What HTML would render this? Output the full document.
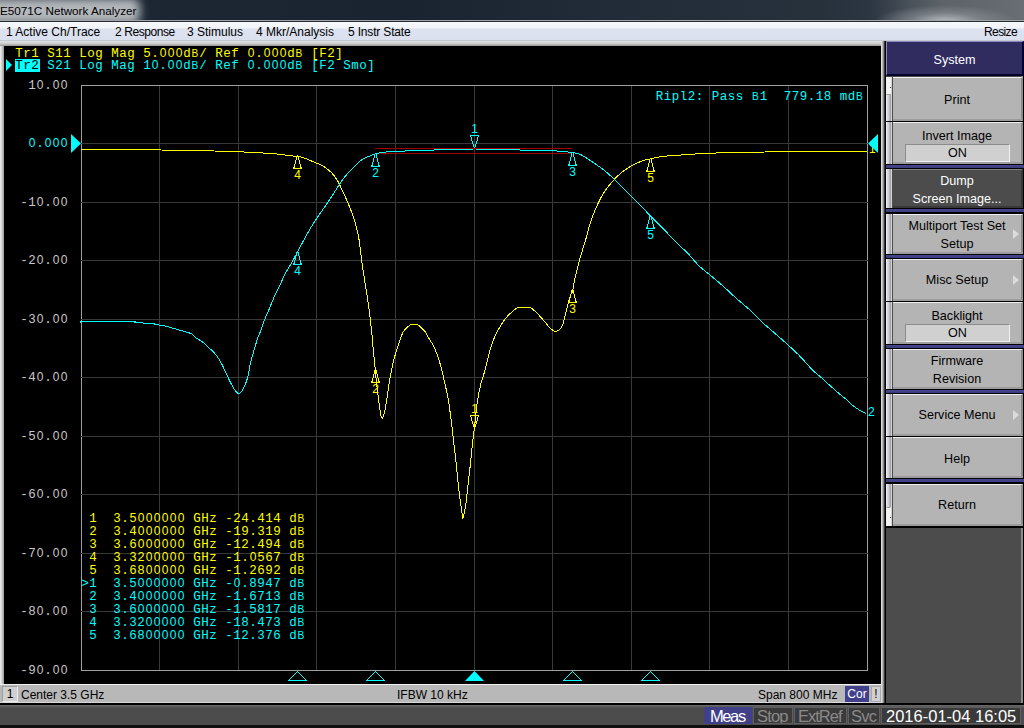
<!DOCTYPE html>
<html><head><meta charset="utf-8"><style>
*{margin:0;padding:0;box-sizing:border-box}
html,body{width:1024px;height:728px;overflow:hidden;background:#4c4c4c;font-family:"Liberation Sans",sans-serif}
.abs{position:absolute}
.mono{font-family:"Liberation Mono",monospace;font-size:12.5px;letter-spacing:0.5px;white-space:pre;position:absolute;line-height:14px}
.ylab{width:68px;text-align:right;left:0}
.mrow{left:81.5px}
.mn{font-family:"Liberation Sans",sans-serif;font-size:12px}
.m{font-family:"Liberation Mono",monospace;font-size:12.5px;text-anchor:middle}
.z{font-family:"Liberation Sans",sans-serif;font-size:12px;text-anchor:middle}
.bb{font-family:"Liberation Sans",sans-serif;font-size:10.2px;text-anchor:middle}
#title{left:0;top:0;width:1024px;height:20px;overflow:hidden;background:
 radial-gradient(ellipse 70px 16px at 945px 21px, rgba(190,196,200,0.9) 0%, rgba(140,146,152,0.6) 50%, rgba(90,96,104,0) 100%),
 linear-gradient(90deg,#1e2834 0%,#1a2430 40%,#222c38 60%,#27313c 80%,#2c3642 85%,#4a525a 89%,#5c6268 92%,#686e74 100%);}
#glow{position:absolute;left:-20px;top:-2px;width:160px;height:26px;background:#b4b8bc;filter:blur(5px);border-radius:8px}
#title span{position:absolute;left:0;top:3px;font-size:11.7px;color:#000;line-height:16px}
#menu{left:0;top:20px;width:1024px;height:22px;background:linear-gradient(#a0a4a8 0,#a0a4a8 1px,#2a2e34 1px,#2a2e34 2px,#f6f8fb 2px,#f1f4f9 8px,#dce2ef 9px,#dae0ee 20px,#c4c8d0 20px,#c4c8d0 21px,#e8e8e8 21px)}
#menu span{position:absolute;top:4px;font-size:12px;line-height:16px;color:#000}
#frame{left:0;top:41px;width:886px;height:663px;background:linear-gradient(90deg,#f0f0f0 0,#d0d0d0 2px,#a8a8a8 3px,#a8a8a8 4px,#c8c8c8 4px)}
#frametop{left:0;top:41px;width:886px;height:5px;background:linear-gradient(#e4e4e4,#c8c8c8 60%,#909090)}
#chart{left:4px;top:46px;width:877px;height:638px;background:#000}
#frameR{left:881px;top:41px;width:5px;height:663px;background:linear-gradient(90deg,#e8e8e8 0,#d0d0d0 1px,#a0a0a0 2px,#707070 3px,#000 4px)}
#status{left:0;top:684px;width:881px;height:20px;background:linear-gradient(#f0f0f0 0,#f0f0f0 1px,#b8b8b8 1px,#b8b8b8 18px,#d8d8d8 18px,#d8d8d8 19px,#101010 19px)}
#status span{position:absolute;top:3px;font-size:12px;line-height:16px;color:#000}
#bottom{left:0;top:703px;width:1024px;height:25px;background:linear-gradient(#000 0,#000 2px,#6c6c6c 2px,#4c4c4c 5px,#4c4c4c 22px,#101010 22px)}
.bbox{position:absolute;top:707px;height:17px;background:#3a3a3a;border:1px solid #5e5e5e;font-size:16.5px;line-height:16px;color:#8a8a8a;white-space:nowrap;overflow:hidden}
#soft{left:886px;top:41px;width:138px;height:662px;background:linear-gradient(90deg,#4c4c4c 0,#4c4c4c 135px,#8c8c8c 135px,#8c8c8c 137px,#000 137px)}
.sk{position:absolute;left:893px;width:130px;background:#b4b4b4;border-top:1px solid #f0f0f0;border-right:2px solid #8c8c8c;border-bottom:2px solid #9c9c9c;font-size:12.6px;color:#000;text-align:center;line-height:18px}
.sep{position:absolute;left:886px;width:138px;background:linear-gradient(#000 0,#000 1px,#46468a 1px,#3c3c7c 4px,#000 4px)}
.sepb{position:absolute;left:886px;width:138px;height:1px;background:#000}
.onbox{position:absolute;left:905px;width:105px;height:18px;background:#d0d0d0;border-top:1px solid #8c8c8c;border-left:1px solid #8c8c8c;border-bottom:1px solid #f0f0f0;border-right:1px solid #f0f0f0;font-size:12.6px;line-height:16px;text-align:center;color:#000}
.arrow{position:absolute;left:1013px;width:0;height:0;border-top:5px solid transparent;border-bottom:5px solid transparent;border-left:6px solid #dcdcdc}
</style></head><body>
<div id="title" class="abs"><div id="glow"></div><span>E5071C Network Analyzer</span></div>
<div id="menu" class="abs">
<span style="left:6px">1 Active Ch/Trace</span>
<span style="left:115px;letter-spacing:-0.43px">2 Response</span>
<span style="left:187px">3 Stimulus</span>
<span style="left:256px">4 Mkr/Analysis</span>
<span style="left:348px;letter-spacing:-0.17px">5 Instr State</span>
<span style="left:984px;letter-spacing:-0.6px">Resize</span>
</div>
<div id="frame" class="abs"></div>
<div id="frametop" class="abs"></div>
<div id="chart" class="abs"></div>
<div id="frameR" class="abs"></div>

<svg class="abs" style="left:0;top:0" width="1024" height="728">
<text class="m" x="19 27 35 51 59 67 83 91 99 115 123 131 147 155 187 203 219 227 235 259 291 315 323 331 339" y="57.13" fill="#ffff00">Tr1S11LogMag5.d/Ref.d[F2]</text><text class="z" x="163 171 179 251 267 275 283" y="57.13" fill="#ffff00">0000000</text><text class="bb" x="195 299" y="57.13" fill="#ffff00">BB</text>
<rect x="15" y="59" width="25" height="13" fill="#00ffff"/>
<text class="m" x="19 27 35" y="69.33" fill="#000000">Tr2</text>
<text class="m" x="51 59 67 83 91 99 115 123 131 147 163 187 203 219 227 235 259 291 315 323 331 347 355 363 371" y="69.33" fill="#00ffff">S21LogMag1.d/Ref.d[F2Smo]</text><text class="z" x="155 171 179 251 267 275 283" y="69.33" fill="#00ffff">0000000</text><text class="bb" x="195 299" y="69.33" fill="#00ffff">BB</text>

<polygon points="6,59 12,65 6,71" fill="#00ffff"/>
<line x1="81.5" y1="85" x2="81.5" y2="670" stroke="#a0a0a0"/>
<line x1="159.5" y1="85" x2="159.5" y2="670" stroke="#393939"/>
<line x1="238.5" y1="85" x2="238.5" y2="670" stroke="#393939"/>
<line x1="316.5" y1="85" x2="316.5" y2="670" stroke="#393939"/>
<line x1="395.5" y1="85" x2="395.5" y2="670" stroke="#393939"/>
<line x1="474.5" y1="85" x2="474.5" y2="670" stroke="#393939"/>
<line x1="552.5" y1="85" x2="552.5" y2="670" stroke="#393939"/>
<line x1="631.5" y1="85" x2="631.5" y2="670" stroke="#393939"/>
<line x1="709.5" y1="85" x2="709.5" y2="670" stroke="#393939"/>
<line x1="788.5" y1="85" x2="788.5" y2="670" stroke="#393939"/>
<line x1="867.5" y1="85" x2="867.5" y2="670" stroke="#a0a0a0"/>
<line x1="81" y1="85.5" x2="868" y2="85.5" stroke="#a0a0a0"/>
<line x1="81" y1="143.5" x2="868" y2="143.5" stroke="#393939"/>
<line x1="81" y1="202.5" x2="868" y2="202.5" stroke="#393939"/>
<line x1="81" y1="260.5" x2="868" y2="260.5" stroke="#393939"/>
<line x1="81" y1="319.5" x2="868" y2="319.5" stroke="#393939"/>
<line x1="81" y1="377.5" x2="868" y2="377.5" stroke="#393939"/>
<line x1="81" y1="436.5" x2="868" y2="436.5" stroke="#393939"/>
<line x1="81" y1="494.5" x2="868" y2="494.5" stroke="#393939"/>
<line x1="81" y1="553.5" x2="868" y2="553.5" stroke="#393939"/>
<line x1="81" y1="611.5" x2="868" y2="611.5" stroke="#393939"/>
<line x1="81" y1="670.5" x2="868" y2="670.5" stroke="#a0a0a0"/>
<text class="m" x="659.5 667.5 675.5 683.5 691.5 699.5 715.5 723.5 731.5 739.5 763.5 787.5 795.5 803.5 811.5 819.5 827.5 843.5 851.5" y="100.33" fill="#00ffff">Ripl2:Pass1779.18md</text><text class="bb" x="755.5 859.5" y="100.33" fill="#00ffff">BB</text>
<text class="m" x="32 48" y="89.33" fill="#c8c8c8">1.</text><text class="z" x="40 56 64" y="89.33" fill="#c8c8c8">000</text>
<text class="m" x="40" y="147.33" fill="#00ffff">.</text><text class="z" x="32 48 56 64" y="147.33" fill="#00ffff">0000</text>
<text class="m" x="24 32 48" y="206.33" fill="#c8c8c8">-1.</text><text class="z" x="40 56 64" y="206.33" fill="#c8c8c8">000</text>
<text class="m" x="24 32 48" y="264.33" fill="#c8c8c8">-2.</text><text class="z" x="40 56 64" y="264.33" fill="#c8c8c8">000</text>
<text class="m" x="24 32 48" y="323.33" fill="#c8c8c8">-3.</text><text class="z" x="40 56 64" y="323.33" fill="#c8c8c8">000</text>
<text class="m" x="24 32 48" y="381.33" fill="#c8c8c8">-4.</text><text class="z" x="40 56 64" y="381.33" fill="#c8c8c8">000</text>
<text class="m" x="24 32 48" y="440.33" fill="#c8c8c8">-5.</text><text class="z" x="40 56 64" y="440.33" fill="#c8c8c8">000</text>
<text class="m" x="24 32 48" y="498.33" fill="#c8c8c8">-6.</text><text class="z" x="40 56 64" y="498.33" fill="#c8c8c8">000</text>
<text class="m" x="24 32 48" y="557.33" fill="#c8c8c8">-7.</text><text class="z" x="40 56 64" y="557.33" fill="#c8c8c8">000</text>
<text class="m" x="24 32 48" y="615.33" fill="#c8c8c8">-8.</text><text class="z" x="40 56 64" y="615.33" fill="#c8c8c8">000</text>
<text class="m" x="24 32 48" y="674.33" fill="#c8c8c8">-9.</text><text class="z" x="40 56 64" y="674.33" fill="#c8c8c8">000</text>
<text class="m" x="93 117 125 133 197 205 213 229 237 245 253 261 269 277 293" y="522.33" fill="#ffff00">13.5GHz-24.414d</text><text class="z" x="141 149 157 165 173 181" y="522.33" fill="#ffff00">000000</text><text class="bb" x="301" y="522.33" fill="#ffff00">B</text>
<text class="m" x="93 117 125 133 197 205 213 229 237 245 253 261 269 277 293" y="535.33" fill="#ffff00">23.4GHz-19.319d</text><text class="z" x="141 149 157 165 173 181" y="535.33" fill="#ffff00">000000</text><text class="bb" x="301" y="535.33" fill="#ffff00">B</text>
<text class="m" x="93 117 125 133 197 205 213 229 237 245 253 261 269 277 293" y="548.33" fill="#ffff00">33.6GHz-12.494d</text><text class="z" x="141 149 157 165 173 181" y="548.33" fill="#ffff00">000000</text><text class="bb" x="301" y="548.33" fill="#ffff00">B</text>
<text class="m" x="93 117 125 133 141 197 205 213 229 237 245 261 269 277 293" y="561.33" fill="#ffff00">43.32GHz-1.567d</text><text class="z" x="149 157 165 173 181 253" y="561.33" fill="#ffff00">000000</text><text class="bb" x="301" y="561.33" fill="#ffff00">B</text>
<text class="m" x="93 117 125 133 141 197 205 213 229 237 245 253 261 269 277 293" y="574.33" fill="#ffff00">53.68GHz-1.2692d</text><text class="z" x="149 157 165 173 181" y="574.33" fill="#ffff00">00000</text><text class="bb" x="301" y="574.33" fill="#ffff00">B</text>
<text class="m" x="85 93 117 125 133 197 205 213 229 245 253 261 269 277 293" y="587.33" fill="#00ffff">&gt;13.5GHz-.8947d</text><text class="z" x="141 149 157 165 173 181 237" y="587.33" fill="#00ffff">0000000</text><text class="bb" x="301" y="587.33" fill="#00ffff">B</text>
<text class="m" x="93 117 125 133 197 205 213 229 237 245 253 261 269 277 293" y="600.33" fill="#00ffff">23.4GHz-1.6713d</text><text class="z" x="141 149 157 165 173 181" y="600.33" fill="#00ffff">000000</text><text class="bb" x="301" y="600.33" fill="#00ffff">B</text>
<text class="m" x="93 117 125 133 197 205 213 229 237 245 253 261 269 277 293" y="613.33" fill="#00ffff">33.6GHz-1.5817d</text><text class="z" x="141 149 157 165 173 181" y="613.33" fill="#00ffff">000000</text><text class="bb" x="301" y="613.33" fill="#00ffff">B</text>
<text class="m" x="93 117 125 133 141 197 205 213 229 237 245 253 261 269 277 293" y="626.33" fill="#00ffff">43.32GHz-18.473d</text><text class="z" x="149 157 165 173 181" y="626.33" fill="#00ffff">00000</text><text class="bb" x="301" y="626.33" fill="#00ffff">B</text>
<text class="m" x="93 117 125 133 141 197 205 213 229 237 245 253 261 269 277 293" y="639.33" fill="#00ffff">53.68GHz-12.376d</text><text class="z" x="149 157 165 173 181" y="639.33" fill="#00ffff">00000</text><text class="bb" x="301" y="639.33" fill="#00ffff">B</text>
<line x1="375" y1="148.5" x2="572" y2="148.5" stroke="#a00000"/>
<line x1="375" y1="153.5" x2="572" y2="153.5" stroke="#a00000"/>
<polyline points="81.00,149.50 96.01,149.58 117.69,149.69 141.02,149.83 161.00,150.00 176.69,150.21 190.62,150.47 203.00,150.74 214.00,151.00 223.38,151.25 231.12,151.50 237.81,151.75 244.00,152.00 249.64,152.25 254.50,152.50 258.86,152.75 263.00,153.00 266.99,153.25 270.69,153.50 274.04,153.75 277.00,154.00 279.42,154.25 281.38,154.50 283.14,154.75 285.00,155.00 287.07,155.26 289.19,155.53 291.21,155.79 293.00,156.00 294.46,156.15 295.69,156.25 296.82,156.35 298.00,156.50 299.26,156.69 300.53,156.91 301.79,157.17 303.00,157.50 304.20,157.93 305.39,158.44 306.51,158.96 307.50,159.40 308.26,159.71 308.86,159.94 309.46,160.18 310.25,160.50 311.20,160.89 312.25,161.32 313.48,161.84 315.00,162.50 316.94,163.31 319.20,164.25 321.56,165.31 323.75,166.50 325.77,167.85 327.73,169.36 329.58,170.94 331.25,172.50 332.71,174.04 334.00,175.61 335.16,177.18 336.25,178.75 337.14,180.08 337.84,181.25 338.63,182.73 339.75,185.00 341.37,188.36 343.33,192.50 345.37,196.95 347.25,201.25 348.93,205.25 350.53,209.22 352.05,213.26 353.50,217.50 354.88,221.89 356.20,226.41 357.41,231.15 358.50,236.25 359.41,241.89 360.17,247.97 360.87,254.12 361.60,260.00 362.37,265.43 363.13,270.62 363.92,275.82 364.75,281.25 365.69,287.22 366.70,293.52 367.68,299.62 368.50,305.00 369.11,309.31 369.57,312.89 369.97,316.28 370.40,320.00 370.89,324.41 371.40,329.16 371.87,333.70 372.25,337.50 372.47,340.05 372.57,341.75 372.68,343.45 372.90,346.00 373.31,349.95 373.82,354.73 374.34,359.53 374.75,363.50 374.97,366.13 375.07,367.95 375.18,369.74 375.40,372.25 375.78,375.81 376.25,379.98 376.76,384.35 377.25,388.50 377.70,392.35 378.13,396.12 378.59,399.82 379.10,403.50 379.68,407.58 380.31,411.91 380.96,415.64 381.60,417.90 382.23,418.31 382.85,417.38 383.48,415.61 384.10,413.50 384.71,411.15 385.31,408.30 385.93,404.93 386.60,401.00 387.33,396.24 388.10,390.77 388.91,385.09 389.75,379.75 390.65,374.74 391.59,369.83 392.55,365.19 393.50,361.00 394.39,357.52 395.26,354.58 396.18,351.72 397.25,348.50 398.53,344.52 399.96,340.11 401.45,335.90 402.90,332.50 404.36,330.14 405.86,328.48 407.28,327.26 408.50,326.25 409.39,325.48 410.05,325.03 410.70,324.79 411.60,324.60 412.79,324.33 414.15,324.08 415.65,324.09 417.25,324.60 419.07,325.78 421.08,327.46 423.05,329.37 424.75,331.25 426.06,333.07 427.12,334.96 428.08,336.87 429.10,338.75 430.18,340.46 431.26,342.06 432.36,343.82 433.50,346.00 434.74,348.73 436.04,351.84 437.32,355.16 438.50,358.50 439.53,361.79 440.45,365.14 441.34,368.61 442.25,372.25 443.22,376.22 444.20,380.45 445.15,384.64 446.00,388.50 446.70,391.65 447.29,394.36 447.86,397.26 448.50,401.00 449.27,406.13 450.11,412.19 450.92,418.27 451.60,423.50 452.06,427.33 452.39,430.33 452.69,433.29 453.10,437.00 453.67,441.83 454.33,447.30 454.99,452.93 455.60,458.25 456.11,463.08 456.57,467.70 457.01,472.28 457.50,477.00 458.04,482.03 458.61,487.23 459.19,492.32 459.75,497.00 460.32,501.30 460.91,505.34 461.45,508.96 461.90,512.00 462.17,514.67 462.31,516.98 462.47,518.43 462.80,518.50 463.37,516.87 464.10,513.86 464.88,509.99 465.60,505.75 466.25,501.06 466.87,495.73 467.48,490.10 468.10,484.50 468.74,478.88 469.39,473.09 470.02,467.39 470.60,462.00 471.12,456.96 471.59,452.16 472.04,447.59 472.50,443.25 472.95,439.49 473.39,436.20 473.86,432.69 474.40,428.25 475.02,422.35 475.71,415.48 476.45,408.50 477.25,402.25 478.11,396.94 479.04,392.13 480.01,387.69 481.00,383.50 482.04,379.68 483.12,376.26 484.21,372.93 485.25,369.40 486.21,365.55 487.12,361.55 488.03,357.57 489.00,353.75 490.04,350.11 491.12,346.56 492.24,343.17 493.40,340.00 494.55,337.14 495.71,334.55 496.96,332.03 498.40,329.40 500.11,326.52 502.03,323.52 504.01,320.63 505.90,318.10 507.72,315.99 509.52,314.17 511.23,312.60 512.75,311.25 514.03,310.15 515.12,309.30 516.11,308.64 517.10,308.10 518.00,307.71 518.80,307.48 519.70,307.35 520.90,307.25 522.56,307.12 524.54,307.01 526.57,307.02 528.40,307.25 529.86,307.64 531.12,308.18 532.42,309.00 534.00,310.25 536.02,312.14 538.33,314.54 540.66,317.08 542.75,319.40 544.53,321.48 546.15,323.49 547.63,325.33 549.00,326.90 550.27,328.16 551.43,329.18 552.48,329.98 553.40,330.60 554.14,331.02 554.73,331.23 555.28,331.29 555.90,331.25 556.62,331.17 557.37,331.02 558.17,330.66 559.00,330.00 559.89,329.11 560.83,328.02 561.80,326.52 562.75,324.40 563.69,321.40 564.62,317.71 565.56,313.76 566.50,310.00 567.47,306.33 568.45,302.58 569.40,299.10 570.25,296.25 570.98,294.38 571.62,293.23 572.20,292.17 572.75,290.60 573.19,288.52 573.53,286.20 573.94,283.43 574.60,280.00 575.58,275.66 576.78,270.59 578.12,265.22 579.50,260.00 580.98,254.91 582.58,249.77 584.17,244.74 585.60,240.00 586.78,235.67 587.79,231.64 588.81,227.72 590.00,223.75 591.43,219.60 593.01,215.39 594.64,211.30 596.25,207.50 597.78,204.07 599.30,200.90 600.85,197.90 602.50,195.00 604.26,192.19 606.09,189.51 608.01,186.92 610.00,184.40 612.07,181.92 614.22,179.51 616.45,177.19 618.75,175.00 621.10,172.96 623.52,171.05 626.04,169.24 628.75,167.50 631.79,165.76 635.08,164.05 638.33,162.50 641.25,161.25 643.67,160.40 645.78,159.87 647.81,159.46 650.00,159.00 652.35,158.45 654.77,157.90 657.29,157.37 660.00,156.90 663.04,156.48 666.34,156.10 669.60,155.77 672.50,155.50 674.78,155.32 676.66,155.22 678.58,155.14 681.00,155.00 683.95,154.79 687.22,154.53 690.88,154.26 695.00,154.00 699.10,153.75 703.31,153.50 708.62,153.25 716.00,153.00 725.04,152.74 735.44,152.47 748.37,152.21 765.00,152.00 789.16,151.83 819.06,151.69 847.43,151.58 867.00,151.50" fill="none" stroke="#ffff00" stroke-width="1" shape-rendering="crispEdges"/>
<polyline points="81.00,322.50 80.73,322.30 80.12,322.00 80.95,321.70 85.00,321.50 94.51,321.41 107.94,321.38 121.40,321.41 131.00,321.50 134.86,321.67 135.34,321.92 134.90,322.21 136.00,322.50 139.54,322.79 144.13,323.11 148.78,323.43 152.50,323.75 154.93,324.07 156.63,324.39 157.99,324.71 159.40,325.00 160.82,325.23 162.08,325.42 163.41,325.65 165.00,326.00 167.00,326.53 169.26,327.18 171.58,327.87 173.75,328.50 175.65,329.03 177.42,329.51 179.23,330.01 181.25,330.60 183.69,331.29 186.41,332.03 189.04,332.85 191.25,333.75 192.79,334.75 193.91,335.83 194.94,336.96 196.25,338.10 197.98,339.21 199.92,340.32 201.90,341.49 203.75,342.75 205.42,344.16 206.99,345.69 208.51,347.24 210.00,348.75 211.44,350.12 212.84,351.41 214.21,352.78 215.60,354.40 216.99,356.26 218.38,358.28 219.79,360.54 221.25,363.10 222.80,366.15 224.42,369.59 226.01,373.08 227.50,376.25 228.82,379.04 230.04,381.62 231.24,384.02 232.50,386.25 233.89,388.51 235.34,390.72 236.77,392.51 238.10,393.50 239.27,393.58 240.34,392.95 241.39,391.72 242.50,390.00 243.75,387.70 245.08,384.81 246.37,381.53 247.50,378.10 248.41,374.36 249.17,370.26 249.87,366.18 250.60,362.50 251.37,359.41 252.13,356.68 252.92,354.05 253.75,351.25 254.67,348.07 255.67,344.69 256.64,341.46 257.50,338.75 258.15,336.92 258.67,335.70 259.23,334.44 260.00,332.50 261.12,329.43 262.47,325.66 263.83,321.88 265.00,318.75 265.90,316.54 266.65,314.87 267.32,313.42 268.00,311.90 268.63,310.39 269.19,308.98 269.80,307.44 270.60,305.50 271.64,302.97 272.85,300.03 274.13,296.98 275.40,294.10 276.63,291.50 277.88,289.01 279.14,286.54 280.40,284.00 281.63,281.40 282.83,278.77 284.10,276.08 285.50,273.30 287.15,270.32 288.97,267.18 290.78,264.11 292.40,261.30 293.64,259.11 294.63,257.32 295.72,255.32 297.25,252.50 299.42,248.41 302.01,243.47 304.72,238.36 307.25,233.75 309.50,229.85 311.62,226.30 313.75,222.89 316.00,219.40 318.47,215.73 321.08,212.01 323.65,208.38 326.00,205.00 328.05,201.98 329.91,199.22 331.68,196.53 333.50,193.75 335.40,190.74 337.31,187.63 339.20,184.62 341.00,181.90 342.61,179.65 344.09,177.71 345.65,175.83 347.50,173.75 349.87,171.25 352.59,168.51 355.27,165.90 357.50,163.75 358.96,162.28 359.92,161.26 360.93,160.40 362.50,159.40 364.93,158.12 367.89,156.75 370.97,155.45 373.75,154.40 376.10,153.69 378.23,153.20 380.32,152.84 382.50,152.50 384.37,152.19 385.98,151.94 388.24,151.73 392.00,151.50 397.90,151.25 405.34,151.00 413.36,150.75 421.00,150.50 428.13,150.24 435.22,149.97 442.20,149.71 449.00,149.50 455.76,149.32 462.47,149.16 468.82,149.04 474.50,149.00 478.36,149.04 480.91,149.16 484.38,149.32 491.00,149.50 502.96,149.71 518.53,149.97 534.09,150.24 546.00,150.50 552.88,150.75 556.81,151.00 559.34,151.25 562.00,151.50 564.99,151.74 567.56,151.97 569.85,152.21 572.00,152.50 574.01,152.82 575.83,153.17 577.48,153.56 579.00,154.00 580.19,154.39 581.11,154.75 582.16,155.30 583.75,156.25 586.16,157.79 589.12,159.75 592.21,161.84 595.00,163.75 597.33,165.34 599.45,166.80 601.53,168.29 603.75,170.00 606.13,171.95 608.59,174.06 611.13,176.33 613.75,178.75 616.50,181.42 619.38,184.30 622.25,187.22 625.00,190.00 627.65,192.65 630.23,195.23 632.71,197.71 635.00,200.00 637.05,202.04 638.91,203.88 640.68,205.65 642.50,207.50 644.32,209.42 646.09,211.35 647.95,213.35 650.00,215.50 652.24,217.74 654.61,220.06 657.18,222.57 660.00,225.40 663.14,228.66 666.56,232.25 670.14,235.99 673.75,239.70 677.53,243.43 681.48,247.24 685.32,250.96 688.75,254.40 691.57,257.49 693.98,260.33 696.28,263.01 698.75,265.60 701.45,268.05 704.22,270.34 707.07,272.61 710.00,275.00 712.98,277.49 716.02,280.03 719.17,282.70 722.50,285.60 726.12,288.89 729.96,292.46 733.82,296.06 737.50,299.40 740.94,302.37 744.24,305.12 747.45,307.81 750.60,310.60 753.70,313.60 756.74,316.70 759.69,319.73 762.50,322.50 765.13,324.91 767.62,327.07 770.04,329.14 772.50,331.25 774.85,333.29 777.11,335.23 779.56,337.37 782.50,340.00 786.18,343.31 790.39,347.11 794.72,351.10 798.75,355.00 802.48,358.93 806.10,362.97 809.48,366.78 812.50,370.00 815.01,372.37 817.12,374.14 819.07,375.69 821.10,377.40 823.21,379.32 825.30,381.25 827.44,383.24 829.70,385.30 832.23,387.56 834.94,389.95 837.59,392.26 839.90,394.25 841.77,395.79 843.35,397.02 844.78,398.13 846.20,399.30 847.63,400.61 849.00,401.94 850.32,403.23 851.60,404.40 852.81,405.41 853.94,406.30 855.09,407.14 856.30,408.00 857.64,408.92 859.05,409.86 860.46,410.74 861.80,411.50 863.14,412.13 864.49,412.67 865.67,413.10 866.50,413.40" fill="none" stroke="#00ffff" stroke-width="1" shape-rendering="crispEdges"/>
<rect x="474" y="427" width="1" height="1" fill="#ffff00"/><rect x="473" y="426" width="1" height="1" fill="#ffff00"/><rect x="475" y="426" width="1" height="1" fill="#ffff00"/><rect x="473" y="425" width="1" height="1" fill="#ffff00"/><rect x="475" y="425" width="1" height="1" fill="#ffff00"/><rect x="473" y="424" width="1" height="1" fill="#ffff00"/><rect x="475" y="424" width="1" height="1" fill="#ffff00"/><rect x="472" y="423" width="1" height="1" fill="#ffff00"/><rect x="476" y="423" width="1" height="1" fill="#ffff00"/><rect x="472" y="422" width="1" height="1" fill="#ffff00"/><rect x="476" y="422" width="1" height="1" fill="#ffff00"/><rect x="472" y="421" width="1" height="1" fill="#ffff00"/><rect x="476" y="421" width="1" height="1" fill="#ffff00"/><rect x="471" y="420" width="1" height="1" fill="#ffff00"/><rect x="477" y="420" width="1" height="1" fill="#ffff00"/><rect x="471" y="419" width="1" height="1" fill="#ffff00"/><rect x="477" y="419" width="1" height="1" fill="#ffff00"/><rect x="471" y="418" width="1" height="1" fill="#ffff00"/><rect x="477" y="418" width="1" height="1" fill="#ffff00"/><rect x="471" y="417" width="1" height="1" fill="#ffff00"/><rect x="477" y="417" width="1" height="1" fill="#ffff00"/><rect x="470" y="416" width="1" height="1" fill="#ffff00"/><rect x="478" y="416" width="1" height="1" fill="#ffff00"/><rect x="470" y="415" width="9" height="1" fill="#ffff00"/>
<text x="474.5" y="413" fill="#ffff00" text-anchor="middle" class="mn">1</text>
<rect x="375" y="369" width="1" height="1" fill="#ffff00"/><rect x="374" y="370" width="1" height="1" fill="#ffff00"/><rect x="376" y="370" width="1" height="1" fill="#ffff00"/><rect x="374" y="371" width="1" height="1" fill="#ffff00"/><rect x="376" y="371" width="1" height="1" fill="#ffff00"/><rect x="374" y="372" width="1" height="1" fill="#ffff00"/><rect x="376" y="372" width="1" height="1" fill="#ffff00"/><rect x="374" y="373" width="1" height="1" fill="#ffff00"/><rect x="376" y="373" width="1" height="1" fill="#ffff00"/><rect x="373" y="374" width="1" height="1" fill="#ffff00"/><rect x="377" y="374" width="1" height="1" fill="#ffff00"/><rect x="373" y="375" width="1" height="1" fill="#ffff00"/><rect x="377" y="375" width="1" height="1" fill="#ffff00"/><rect x="373" y="376" width="1" height="1" fill="#ffff00"/><rect x="377" y="376" width="1" height="1" fill="#ffff00"/><rect x="373" y="377" width="1" height="1" fill="#ffff00"/><rect x="377" y="377" width="1" height="1" fill="#ffff00"/><rect x="372" y="378" width="1" height="1" fill="#ffff00"/><rect x="378" y="378" width="1" height="1" fill="#ffff00"/><rect x="372" y="379" width="1" height="1" fill="#ffff00"/><rect x="378" y="379" width="1" height="1" fill="#ffff00"/><rect x="372" y="380" width="1" height="1" fill="#ffff00"/><rect x="378" y="380" width="1" height="1" fill="#ffff00"/><rect x="372" y="381" width="1" height="1" fill="#ffff00"/><rect x="378" y="381" width="1" height="1" fill="#ffff00"/><rect x="371" y="382" width="9" height="1" fill="#ffff00"/><rect x="371" y="381" width="1" height="1" fill="#ffff00"/><rect x="379" y="381" width="1" height="1" fill="#ffff00"/>
<text x="375.5" y="392.8" fill="#ffff00" text-anchor="middle" class="mn">2</text>
<rect x="572" y="289" width="1" height="1" fill="#ffff00"/><rect x="571" y="290" width="1" height="1" fill="#ffff00"/><rect x="573" y="290" width="1" height="1" fill="#ffff00"/><rect x="571" y="291" width="1" height="1" fill="#ffff00"/><rect x="573" y="291" width="1" height="1" fill="#ffff00"/><rect x="571" y="292" width="1" height="1" fill="#ffff00"/><rect x="573" y="292" width="1" height="1" fill="#ffff00"/><rect x="571" y="293" width="1" height="1" fill="#ffff00"/><rect x="573" y="293" width="1" height="1" fill="#ffff00"/><rect x="570" y="294" width="1" height="1" fill="#ffff00"/><rect x="574" y="294" width="1" height="1" fill="#ffff00"/><rect x="570" y="295" width="1" height="1" fill="#ffff00"/><rect x="574" y="295" width="1" height="1" fill="#ffff00"/><rect x="570" y="296" width="1" height="1" fill="#ffff00"/><rect x="574" y="296" width="1" height="1" fill="#ffff00"/><rect x="570" y="297" width="1" height="1" fill="#ffff00"/><rect x="574" y="297" width="1" height="1" fill="#ffff00"/><rect x="569" y="298" width="1" height="1" fill="#ffff00"/><rect x="575" y="298" width="1" height="1" fill="#ffff00"/><rect x="569" y="299" width="1" height="1" fill="#ffff00"/><rect x="575" y="299" width="1" height="1" fill="#ffff00"/><rect x="569" y="300" width="1" height="1" fill="#ffff00"/><rect x="575" y="300" width="1" height="1" fill="#ffff00"/><rect x="569" y="301" width="1" height="1" fill="#ffff00"/><rect x="575" y="301" width="1" height="1" fill="#ffff00"/><rect x="568" y="302" width="9" height="1" fill="#ffff00"/><rect x="568" y="301" width="1" height="1" fill="#ffff00"/><rect x="576" y="301" width="1" height="1" fill="#ffff00"/>
<text x="572.5" y="312.8" fill="#ffff00" text-anchor="middle" class="mn">3</text>
<rect x="297" y="155" width="1" height="1" fill="#ffff00"/><rect x="296" y="156" width="1" height="1" fill="#ffff00"/><rect x="298" y="156" width="1" height="1" fill="#ffff00"/><rect x="296" y="157" width="1" height="1" fill="#ffff00"/><rect x="298" y="157" width="1" height="1" fill="#ffff00"/><rect x="296" y="158" width="1" height="1" fill="#ffff00"/><rect x="298" y="158" width="1" height="1" fill="#ffff00"/><rect x="296" y="159" width="1" height="1" fill="#ffff00"/><rect x="298" y="159" width="1" height="1" fill="#ffff00"/><rect x="295" y="160" width="1" height="1" fill="#ffff00"/><rect x="299" y="160" width="1" height="1" fill="#ffff00"/><rect x="295" y="161" width="1" height="1" fill="#ffff00"/><rect x="299" y="161" width="1" height="1" fill="#ffff00"/><rect x="295" y="162" width="1" height="1" fill="#ffff00"/><rect x="299" y="162" width="1" height="1" fill="#ffff00"/><rect x="295" y="163" width="1" height="1" fill="#ffff00"/><rect x="299" y="163" width="1" height="1" fill="#ffff00"/><rect x="294" y="164" width="1" height="1" fill="#ffff00"/><rect x="300" y="164" width="1" height="1" fill="#ffff00"/><rect x="294" y="165" width="1" height="1" fill="#ffff00"/><rect x="300" y="165" width="1" height="1" fill="#ffff00"/><rect x="294" y="166" width="1" height="1" fill="#ffff00"/><rect x="300" y="166" width="1" height="1" fill="#ffff00"/><rect x="294" y="167" width="1" height="1" fill="#ffff00"/><rect x="300" y="167" width="1" height="1" fill="#ffff00"/><rect x="293" y="168" width="9" height="1" fill="#ffff00"/><rect x="293" y="167" width="1" height="1" fill="#ffff00"/><rect x="301" y="167" width="1" height="1" fill="#ffff00"/>
<text x="297.5" y="178.8" fill="#ffff00" text-anchor="middle" class="mn">4</text>
<rect x="650" y="158" width="1" height="1" fill="#ffff00"/><rect x="649" y="159" width="1" height="1" fill="#ffff00"/><rect x="651" y="159" width="1" height="1" fill="#ffff00"/><rect x="649" y="160" width="1" height="1" fill="#ffff00"/><rect x="651" y="160" width="1" height="1" fill="#ffff00"/><rect x="649" y="161" width="1" height="1" fill="#ffff00"/><rect x="651" y="161" width="1" height="1" fill="#ffff00"/><rect x="649" y="162" width="1" height="1" fill="#ffff00"/><rect x="651" y="162" width="1" height="1" fill="#ffff00"/><rect x="648" y="163" width="1" height="1" fill="#ffff00"/><rect x="652" y="163" width="1" height="1" fill="#ffff00"/><rect x="648" y="164" width="1" height="1" fill="#ffff00"/><rect x="652" y="164" width="1" height="1" fill="#ffff00"/><rect x="648" y="165" width="1" height="1" fill="#ffff00"/><rect x="652" y="165" width="1" height="1" fill="#ffff00"/><rect x="648" y="166" width="1" height="1" fill="#ffff00"/><rect x="652" y="166" width="1" height="1" fill="#ffff00"/><rect x="647" y="167" width="1" height="1" fill="#ffff00"/><rect x="653" y="167" width="1" height="1" fill="#ffff00"/><rect x="647" y="168" width="1" height="1" fill="#ffff00"/><rect x="653" y="168" width="1" height="1" fill="#ffff00"/><rect x="647" y="169" width="1" height="1" fill="#ffff00"/><rect x="653" y="169" width="1" height="1" fill="#ffff00"/><rect x="647" y="170" width="1" height="1" fill="#ffff00"/><rect x="653" y="170" width="1" height="1" fill="#ffff00"/><rect x="646" y="171" width="9" height="1" fill="#ffff00"/><rect x="646" y="170" width="1" height="1" fill="#ffff00"/><rect x="654" y="170" width="1" height="1" fill="#ffff00"/>
<text x="650.5" y="181.8" fill="#ffff00" text-anchor="middle" class="mn">5</text>
<rect x="474" y="147" width="1" height="1" fill="#00ffff"/><rect x="473" y="146" width="1" height="1" fill="#00ffff"/><rect x="475" y="146" width="1" height="1" fill="#00ffff"/><rect x="473" y="145" width="1" height="1" fill="#00ffff"/><rect x="475" y="145" width="1" height="1" fill="#00ffff"/><rect x="473" y="144" width="1" height="1" fill="#00ffff"/><rect x="475" y="144" width="1" height="1" fill="#00ffff"/><rect x="472" y="143" width="1" height="1" fill="#00ffff"/><rect x="476" y="143" width="1" height="1" fill="#00ffff"/><rect x="472" y="142" width="1" height="1" fill="#00ffff"/><rect x="476" y="142" width="1" height="1" fill="#00ffff"/><rect x="472" y="141" width="1" height="1" fill="#00ffff"/><rect x="476" y="141" width="1" height="1" fill="#00ffff"/><rect x="471" y="140" width="1" height="1" fill="#00ffff"/><rect x="477" y="140" width="1" height="1" fill="#00ffff"/><rect x="471" y="139" width="1" height="1" fill="#00ffff"/><rect x="477" y="139" width="1" height="1" fill="#00ffff"/><rect x="471" y="138" width="1" height="1" fill="#00ffff"/><rect x="477" y="138" width="1" height="1" fill="#00ffff"/><rect x="471" y="137" width="1" height="1" fill="#00ffff"/><rect x="477" y="137" width="1" height="1" fill="#00ffff"/><rect x="470" y="136" width="1" height="1" fill="#00ffff"/><rect x="478" y="136" width="1" height="1" fill="#00ffff"/><rect x="470" y="135" width="9" height="1" fill="#00ffff"/>
<text x="474.5" y="133" fill="#00ffff" text-anchor="middle" class="mn">1</text>
<rect x="375" y="153" width="1" height="1" fill="#00ffff"/><rect x="374" y="154" width="1" height="1" fill="#00ffff"/><rect x="376" y="154" width="1" height="1" fill="#00ffff"/><rect x="374" y="155" width="1" height="1" fill="#00ffff"/><rect x="376" y="155" width="1" height="1" fill="#00ffff"/><rect x="374" y="156" width="1" height="1" fill="#00ffff"/><rect x="376" y="156" width="1" height="1" fill="#00ffff"/><rect x="374" y="157" width="1" height="1" fill="#00ffff"/><rect x="376" y="157" width="1" height="1" fill="#00ffff"/><rect x="373" y="158" width="1" height="1" fill="#00ffff"/><rect x="377" y="158" width="1" height="1" fill="#00ffff"/><rect x="373" y="159" width="1" height="1" fill="#00ffff"/><rect x="377" y="159" width="1" height="1" fill="#00ffff"/><rect x="373" y="160" width="1" height="1" fill="#00ffff"/><rect x="377" y="160" width="1" height="1" fill="#00ffff"/><rect x="373" y="161" width="1" height="1" fill="#00ffff"/><rect x="377" y="161" width="1" height="1" fill="#00ffff"/><rect x="372" y="162" width="1" height="1" fill="#00ffff"/><rect x="378" y="162" width="1" height="1" fill="#00ffff"/><rect x="372" y="163" width="1" height="1" fill="#00ffff"/><rect x="378" y="163" width="1" height="1" fill="#00ffff"/><rect x="372" y="164" width="1" height="1" fill="#00ffff"/><rect x="378" y="164" width="1" height="1" fill="#00ffff"/><rect x="372" y="165" width="1" height="1" fill="#00ffff"/><rect x="378" y="165" width="1" height="1" fill="#00ffff"/><rect x="371" y="166" width="9" height="1" fill="#00ffff"/><rect x="371" y="165" width="1" height="1" fill="#00ffff"/><rect x="379" y="165" width="1" height="1" fill="#00ffff"/>
<text x="375.5" y="176.8" fill="#00ffff" text-anchor="middle" class="mn">2</text>
<rect x="572" y="152" width="1" height="1" fill="#00ffff"/><rect x="571" y="153" width="1" height="1" fill="#00ffff"/><rect x="573" y="153" width="1" height="1" fill="#00ffff"/><rect x="571" y="154" width="1" height="1" fill="#00ffff"/><rect x="573" y="154" width="1" height="1" fill="#00ffff"/><rect x="571" y="155" width="1" height="1" fill="#00ffff"/><rect x="573" y="155" width="1" height="1" fill="#00ffff"/><rect x="571" y="156" width="1" height="1" fill="#00ffff"/><rect x="573" y="156" width="1" height="1" fill="#00ffff"/><rect x="570" y="157" width="1" height="1" fill="#00ffff"/><rect x="574" y="157" width="1" height="1" fill="#00ffff"/><rect x="570" y="158" width="1" height="1" fill="#00ffff"/><rect x="574" y="158" width="1" height="1" fill="#00ffff"/><rect x="570" y="159" width="1" height="1" fill="#00ffff"/><rect x="574" y="159" width="1" height="1" fill="#00ffff"/><rect x="570" y="160" width="1" height="1" fill="#00ffff"/><rect x="574" y="160" width="1" height="1" fill="#00ffff"/><rect x="569" y="161" width="1" height="1" fill="#00ffff"/><rect x="575" y="161" width="1" height="1" fill="#00ffff"/><rect x="569" y="162" width="1" height="1" fill="#00ffff"/><rect x="575" y="162" width="1" height="1" fill="#00ffff"/><rect x="569" y="163" width="1" height="1" fill="#00ffff"/><rect x="575" y="163" width="1" height="1" fill="#00ffff"/><rect x="569" y="164" width="1" height="1" fill="#00ffff"/><rect x="575" y="164" width="1" height="1" fill="#00ffff"/><rect x="568" y="165" width="9" height="1" fill="#00ffff"/><rect x="568" y="164" width="1" height="1" fill="#00ffff"/><rect x="576" y="164" width="1" height="1" fill="#00ffff"/>
<text x="572.5" y="175.8" fill="#00ffff" text-anchor="middle" class="mn">3</text>
<rect x="297" y="251" width="1" height="1" fill="#00ffff"/><rect x="296" y="252" width="1" height="1" fill="#00ffff"/><rect x="298" y="252" width="1" height="1" fill="#00ffff"/><rect x="296" y="253" width="1" height="1" fill="#00ffff"/><rect x="298" y="253" width="1" height="1" fill="#00ffff"/><rect x="296" y="254" width="1" height="1" fill="#00ffff"/><rect x="298" y="254" width="1" height="1" fill="#00ffff"/><rect x="296" y="255" width="1" height="1" fill="#00ffff"/><rect x="298" y="255" width="1" height="1" fill="#00ffff"/><rect x="295" y="256" width="1" height="1" fill="#00ffff"/><rect x="299" y="256" width="1" height="1" fill="#00ffff"/><rect x="295" y="257" width="1" height="1" fill="#00ffff"/><rect x="299" y="257" width="1" height="1" fill="#00ffff"/><rect x="295" y="258" width="1" height="1" fill="#00ffff"/><rect x="299" y="258" width="1" height="1" fill="#00ffff"/><rect x="295" y="259" width="1" height="1" fill="#00ffff"/><rect x="299" y="259" width="1" height="1" fill="#00ffff"/><rect x="294" y="260" width="1" height="1" fill="#00ffff"/><rect x="300" y="260" width="1" height="1" fill="#00ffff"/><rect x="294" y="261" width="1" height="1" fill="#00ffff"/><rect x="300" y="261" width="1" height="1" fill="#00ffff"/><rect x="294" y="262" width="1" height="1" fill="#00ffff"/><rect x="300" y="262" width="1" height="1" fill="#00ffff"/><rect x="294" y="263" width="1" height="1" fill="#00ffff"/><rect x="300" y="263" width="1" height="1" fill="#00ffff"/><rect x="293" y="264" width="9" height="1" fill="#00ffff"/><rect x="293" y="263" width="1" height="1" fill="#00ffff"/><rect x="301" y="263" width="1" height="1" fill="#00ffff"/>
<text x="297.5" y="274.8" fill="#00ffff" text-anchor="middle" class="mn">4</text>
<rect x="650" y="215" width="1" height="1" fill="#00ffff"/><rect x="649" y="216" width="1" height="1" fill="#00ffff"/><rect x="651" y="216" width="1" height="1" fill="#00ffff"/><rect x="649" y="217" width="1" height="1" fill="#00ffff"/><rect x="651" y="217" width="1" height="1" fill="#00ffff"/><rect x="649" y="218" width="1" height="1" fill="#00ffff"/><rect x="651" y="218" width="1" height="1" fill="#00ffff"/><rect x="649" y="219" width="1" height="1" fill="#00ffff"/><rect x="651" y="219" width="1" height="1" fill="#00ffff"/><rect x="648" y="220" width="1" height="1" fill="#00ffff"/><rect x="652" y="220" width="1" height="1" fill="#00ffff"/><rect x="648" y="221" width="1" height="1" fill="#00ffff"/><rect x="652" y="221" width="1" height="1" fill="#00ffff"/><rect x="648" y="222" width="1" height="1" fill="#00ffff"/><rect x="652" y="222" width="1" height="1" fill="#00ffff"/><rect x="648" y="223" width="1" height="1" fill="#00ffff"/><rect x="652" y="223" width="1" height="1" fill="#00ffff"/><rect x="647" y="224" width="1" height="1" fill="#00ffff"/><rect x="653" y="224" width="1" height="1" fill="#00ffff"/><rect x="647" y="225" width="1" height="1" fill="#00ffff"/><rect x="653" y="225" width="1" height="1" fill="#00ffff"/><rect x="647" y="226" width="1" height="1" fill="#00ffff"/><rect x="653" y="226" width="1" height="1" fill="#00ffff"/><rect x="647" y="227" width="1" height="1" fill="#00ffff"/><rect x="653" y="227" width="1" height="1" fill="#00ffff"/><rect x="646" y="228" width="9" height="1" fill="#00ffff"/><rect x="646" y="227" width="1" height="1" fill="#00ffff"/><rect x="654" y="227" width="1" height="1" fill="#00ffff"/>
<text x="650.5" y="238.8" fill="#00ffff" text-anchor="middle" class="mn">5</text>
<polygon points="297.5,671.5 288.5,680.5 306.5,680.5" fill="none" stroke="#00ffff" shape-rendering="crispEdges"/>
<polygon points="375.5,671.5 366.5,680.5 384.5,680.5" fill="none" stroke="#00ffff" shape-rendering="crispEdges"/>
<polygon points="572.5,671.5 563.5,680.5 581.5,680.5" fill="none" stroke="#00ffff" shape-rendering="crispEdges"/>
<polygon points="650.5,671.5 641.5,680.5 659.5,680.5" fill="none" stroke="#00ffff" shape-rendering="crispEdges"/>
<polygon points="474.5,671 465,681 484,681" fill="#00ffff"/>
<polygon points="71,134 81,143.5 71,153" fill="#00ffff"/>
<text x="869" y="153" fill="#ffff00" class="mn">1</text>
<polygon points="878,134 868,143.5 878,153" fill="#00ffff"/>
<text x="868" y="416" fill="#00ffff" class="mn">2</text>
</svg>

<div id="status" class="abs">
<div class="abs" style="left:2px;top:2px;width:16px;height:16px;background:#cfcfcf;border-top:1px solid #a0a0a0;border-left:1px solid #a0a0a0;border-bottom:1px solid #ececec;border-right:1px solid #ececec;font-size:12px;line-height:14px;text-align:center">1</div>
<span style="left:21px">Center 3.5 GHz</span>
<span style="left:397px">IFBW 10 kHz</span>
<span style="left:758px">Span 800 MHz</span>
<div class="abs" style="left:845px;top:2px;width:24px;height:16px;background:#40408c;color:#fff;font-size:12px;line-height:16px;text-align:center">Cor</div>
<div class="abs" style="left:871px;top:2px;width:10px;height:16px;background:#d0d0d0;border:1px solid #a8a8a8;color:#200020;font-size:12px;line-height:14px;text-align:center">!</div>
</div>

<div id="soft" class="abs"></div>
<div class="abs" style="left:886px;top:41px;width:138px;height:35px;background:#302c60;border-top:1px solid #8c88c0;border-left:1px solid #8c88c0;border-bottom:2px solid #000028;border-right:2px solid #000030;color:#fff;font-size:12.6px;text-align:center;line-height:36px">System</div>
<div class="abs" style="left:886px;top:77px;width:6px;height:450px;background:linear-gradient(90deg,#f2f2f2 0,#f2f2f2 5px,#d4d4d4 5px)"></div>
<div class="abs" style="left:890px;top:87px;width:1px;height:1px;background:#303030"></div>
<div class="abs" style="left:890px;top:517px;width:1px;height:1px;background:#303030"></div>
<div class="abs" style="left:886px;top:94px;width:5px;height:414px;border-radius:0 0 2px 2px;background:linear-gradient(90deg,#f8f8f8 0,#dedee2 1px,#cacad2 3px,#a4a4ac 4px);border-top:1px solid #a0a0a0;border-bottom:1px solid #909090"></div>

<div class="sk" style="top:77px;height:44px;line-height:45px">Print</div>
<div class="sepb" style="top:121px"></div>
<div class="sk" style="top:122px;height:42px;padding-top:4px">Invert Image</div>
<div class="onbox" style="top:144px">ON</div>
<div class="sep" style="top:164px;height:5px"></div>
<div class="sk" style="top:169px;height:39px;background:#4c4c4c;color:#fff;border-top:1px solid #808080;border-bottom-color:#383838;border-right-color:#383838;padding-top:1.5px">Dump<br>Screen Image...</div>
<div class="sep" style="top:208px;height:6px"></div>
<div class="sk" style="top:214px;height:40px;padding-top:2px">Multiport Test Set<br>Setup</div>
<div class="arrow" style="top:229px"></div>
<div class="sep" style="top:254px;height:5px"></div>
<div class="sk" style="top:259px;height:42px;line-height:41px">Misc Setup</div>
<div class="arrow" style="top:275px"></div>
<div class="sepb" style="top:301px"></div>
<div class="sk" style="top:302px;height:42px;padding-top:4px">Backlight</div>
<div class="onbox" style="top:324px">ON</div>
<div class="sep" style="top:344px;height:5px"></div>
<div class="sk" style="top:349px;height:40px;padding-top:2px">Firmware<br>Revision</div>
<div class="sep" style="top:389px;height:5px"></div>
<div class="sk" style="top:394px;height:42px;line-height:41px">Service Menu</div>
<div class="arrow" style="top:410px"></div>
<div class="sepb" style="top:436px"></div>
<div class="sk" style="top:437px;height:41px;line-height:43px">Help</div>
<div class="sep" style="top:478px;height:6px"></div>
<div class="sk" style="top:484px;height:42px;line-height:41px">Return</div>
<div class="sepb" style="top:526px;height:2px"></div>

<div id="bottom" class="abs"></div>
<div class="bbox" style="left:704px;width:48px;background:#404088;border-color:#404088;color:#fff;padding-left:5px;letter-spacing:-1.4px">Meas</div>
<div class="bbox" style="left:753px;width:40px;padding-left:3px;letter-spacing:-0.8px">Stop</div>
<div class="bbox" style="left:794px;width:53px;padding-left:3px;letter-spacing:-1px">ExtRef</div>
<div class="bbox" style="left:848px;width:32px;padding-left:2px;letter-spacing:-0.8px">Svc</div>
<div class="bbox" style="left:881px;width:140px;color:#fff;padding-left:4px">2016-01-04 16:05</div>
</body></html>
